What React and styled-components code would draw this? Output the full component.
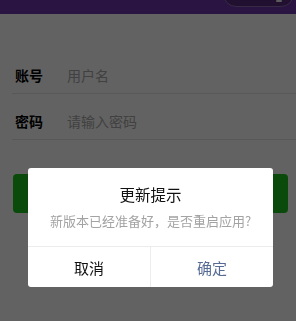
import React from "react";
import styled, { createGlobalStyle } from "styled-components";

const GlobalStyle = createGlobalStyle`
  html, body {
    margin: 0;
    padding: 0;
    background: #f5f5f5;
    font-family: "Noto Sans CJK SC", "Noto Sans", sans-serif;
    overflow: hidden;
  }
`;

const Page = styled.div`
  width: 296px;
  height: 321px;
  background: #f5f5f5;
`;

const NavBar = styled.div`
  position: relative;
  height: 14px;
  background: #6a32a2;
`;

const Capsule = styled.div`
  position: absolute;
  left: 223px;
  top: -20px;
  width: 69px;
  height: 25px;
  border-radius: 13px;
  background: #55287a;
  border: 1px solid #8a6aad;
  &::after {
    content: "";
    position: absolute;
    left: 52px;
    bottom: 4px;
    width: 6px;
    height: 2px;
    border-radius: 1px;
    background: #e6e6e6;
  }
`;

const Form = styled.div`
  padding-top: 34px;
  padding-left: 12px;
`;

const Row = styled.div`
  display: flex;
  align-items: flex-end;
  box-sizing: border-box;
  height: 46px;
  padding: 0 0 8px 3px;
  border-bottom: 1px solid #dcdcdc;
`;

const Label = styled.span`
  width: 52px;
  font-size: 14px;
  line-height: 20px;
  font-weight: 700;
  color: #000;
`;

const Placeholder = styled.span`
  font-size: 14px;
  line-height: 20px;
  color: #a2a2a2;
`;

const SubmitButton = styled.div`
  margin: 34px 8px 0 13px;
  height: 39px;
  border-radius: 4px;
  background: #1bb91b;
`;

const Mask = styled.div`
  position: fixed;
  inset: 0;
  background: rgba(0, 0, 0, 0.6);
`;

const Dialog = styled.div`
  position: fixed;
  left: 28px;
  top: 168px;
  width: 245px;
  background: #fff;
  border-radius: 3px;
  overflow: hidden;
  text-align: center;
`;

const DialogBody = styled.div`
  padding: 15px 10px 15px;
`;

const Title = styled.div`
  font-size: 15.5px;
  line-height: 22px;
  color: #111;
`;

const Message = styled.div`
  margin-top: 6px;
  font-size: 13px;
  line-height: 20px;
  color: #a3a3a3;
`;

const Footer = styled.div`
  display: flex;
  height: 40px;
  border-top: 1px solid #ececec;
`;

const FooterButton = styled.div`
  flex: 1;
  display: flex;
  align-items: center;
  justify-content: center;
  font-size: 15px;
  color: ${({ primary }) => (primary ? "#576b95" : "#111")};
  & + & {
    border-left: 1px solid #ececec;
  }
`;

const App = () => {
  return (
    <Page>
      <GlobalStyle />
      <NavBar>
        <Capsule />
      </NavBar>
      <Form>
        <Row>
          <Label>账号</Label>
          <Placeholder>用户名</Placeholder>
        </Row>
        <Row>
          <Label>密码</Label>
          <Placeholder>请输入密码</Placeholder>
        </Row>
      </Form>
      <SubmitButton />
      <Mask />
      <Dialog>
        <DialogBody>
          <Title>更新提示</Title>
          <Message>新版本已经准备好，是否重启应用?</Message>
        </DialogBody>
        <Footer>
          <FooterButton>取消</FooterButton>
          <FooterButton primary>确定</FooterButton>
        </Footer>
      </Dialog>
    </Page>
  );
};

export default App;
